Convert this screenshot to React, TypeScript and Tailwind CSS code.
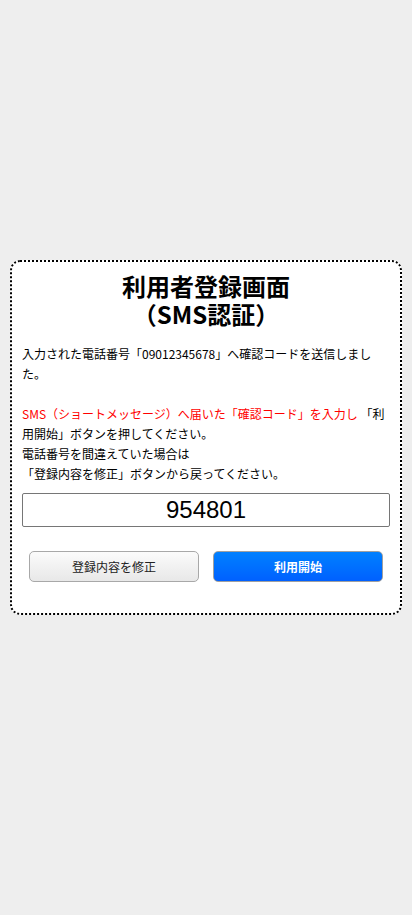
export default function App() {
  return (
    <div
      className="min-h-[915px] bg-[#eeeeee] px-[10px] pt-[260px] text-black"
      style={{ fontFamily: '"Noto Sans CJK JP", "Noto Sans", sans-serif' }}
    >
      {/* Card */}
      <div className="rounded-[10px] border-2 border-dotted border-black bg-white px-[10px] pt-[10px] pb-[31px]">
        <h1 className="text-center text-[24px] font-bold leading-[28px]">
          利用者登録画面
          <br />
          （SMS認証）
        </h1>

        <div className="mt-[16px] text-[12px] leading-[20px]">
          <p>入力された電話番号「09012345678」へ確認コードを送信しました。</p>
          <p className="mt-[20px]">
            <span className="text-[#ff0000]">SMS（ショートメッセージ）へ届いた「確認コード」を入力し</span>{' '}
            「利用開始」ボタンを押してください。
          </p>
          <p>
            電話番号を間違えていた場合は
            <br />
            「登録内容を修正」ボタンから戻ってください。
          </p>
        </div>

        {/* Code input */}
        <input
          type="text"
          defaultValue="954801"
          className="mt-[9px] block h-[34px] w-full rounded-[2px] border border-[#767676] bg-white text-center text-[24px] leading-[32px] outline-none"
          style={{ fontFamily: '"Liberation Sans", Arial, sans-serif' }}
        />

        {/* Buttons */}
        <div className="mt-[24px] flex justify-between px-[7px]">
          <button className="h-[31px] w-[170px] rounded-[5px] border border-[#a8a8a8] bg-gradient-to-b from-[#fbfbfb] to-[#e8e8e8] text-[12px] text-[#222]">
            登録内容を修正
          </button>
          <button className="h-[31px] w-[170px] rounded-[5px] border border-[#a0a0a0] bg-gradient-to-b from-[#0080ff] to-[#0060ff] text-[12px] font-bold text-white">
            利用開始
          </button>
        </div>
      </div>
    </div>
  );
}
